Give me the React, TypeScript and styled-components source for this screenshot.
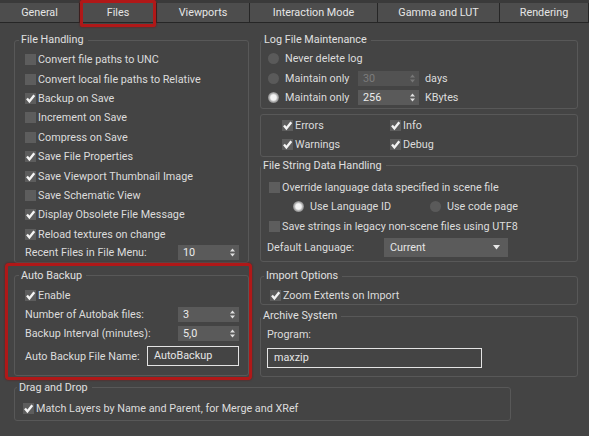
import React from "react";
import styled, { createGlobalStyle } from "styled-components";

const GlobalStyle = createGlobalStyle`
  html, body {
    margin: 0;
    padding: 0;
    background: #444444;
  }
  body {
    font-family: Roboto, "Noto Sans", sans-serif;
    font-size: 10.8px;
    color: #dcdcdc;
  }
`;

const Page = styled.div`
  width: 589px;
  height: 436px;
  background: #444444;
  overflow: hidden;
`;

const TabStrip = styled.div`
  display: flex;
  height: 23px;
  box-sizing: border-box;
  background: #4d4d4d;
  border-top: 3px solid #3a3a3a;
  border-bottom: 1px solid #262626;
`;

const Tab = styled.div<{ $w: number; $marked?: boolean }>`
  position: relative;
  flex: 0 0 ${(p) => p.$w}px;
  line-height: 19px;
  text-align: center;
  font-size: 10.8px;
  color: #e6e6e6;
  border-right: 1px solid #262626;
  box-sizing: border-box;
  &::after {
    content: "";
    display: ${(p) => (p.$marked ? "block" : "none")};
    position: absolute;
    left: 0;
    right: 0;
    top: -3px;
    bottom: -5px;
    border: 3px solid #b01818;
    border-radius: 2px;
    box-shadow: 0 0 2px #6e1010;
  }
`;

const Body = styled.div`
  display: grid;
  grid-template-columns: 235px 318px;
  column-gap: 11px;
  padding: 10px 0 0 14px;
`;

const Column = styled.div`
  display: flex;
  flex-direction: column;
`;

const Group = styled.fieldset<{ $pad?: string; $mt?: number; $w?: number }>`
  margin: ${(p) => p.$mt ?? 0}px 0 0 0;
  padding: ${(p) => p.$pad ?? "3px 9px 0 9px"};
  border: 1px solid #585858;
  border-radius: 3px;
  min-width: 0;
  ${(p) => (p.$w ? `width: ${p.$w}px; box-sizing: border-box;` : "")}
`;

const Legend = styled.legend`
  padding: 0 4px 0 2px;
  margin-left: -6px;
  line-height: 14px;
  font-size: 10.8px;
  color: #e0e0e0;
`;

const Panel = styled.div<{ $mt?: number }>`
  margin-top: ${(p) => p.$mt ?? 0}px;
  border: 1px solid #585858;
  border-radius: 3px;
  padding: 1px 0 1px 21px;
  display: grid;
  grid-template-columns: 108px auto;
`;

const Highlight = styled.div`
  margin: 0 -3px 0 -9px;
  padding: 3px 0 1px 6px;
  border: 3px solid #b01818;
  border-radius: 4px;
  box-shadow: 0 0 2px #6e1010;
`;

const Row = styled.div<{ $h?: number; $indent?: number; $between?: boolean }>`
  display: flex;
  align-items: center;
  height: ${(p) => p.$h ?? 19.5}px;
  padding-left: ${(p) => p.$indent ?? 0}px;
  justify-content: ${(p) => (p.$between ? "space-between" : "flex-start")};
  white-space: nowrap;
`;

const Label = styled.span<{ $w?: number; $ml?: number }>`
  ${(p) => (p.$w ? `flex: 0 0 ${p.$w}px;` : "")}
  margin-left: ${(p) => p.$ml ?? 0}px;
  color: #dcdcdc;
  font-size: 10.8px;
`;

const Box = styled.span`
  flex: 0 0 11px;
  width: 11px;
  height: 11px;
  margin-right: 2px;
  background: #5d5d5d;
  display: inline-flex;
  align-items: center;
  justify-content: center;
`;

const Dot = styled.span<{ $on?: boolean }>`
  flex: 0 0 11px;
  width: 11px;
  height: 11px;
  margin-right: 6px;
  border-radius: 50%;
  background: ${(p) =>
    p.$on
      ? "radial-gradient(circle, #f4f4f4 0 35%, #bdbdbd 50%, #6a6a6a 80%)"
      : "#5a5a5a"};
`;

const Spin = styled.div<{ $w: number; $disabled?: boolean }>`
  display: flex;
  align-items: center;
  justify-content: space-between;
  box-sizing: border-box;
  width: ${(p) => p.$w}px;
  height: 15px;
  padding: 0 4px 0 5px;
  background: ${(p) => (p.$disabled ? "#525252" : "#5a5a5a")};
  color: ${(p) => (p.$disabled ? "#7c7c7c" : "#ececec")};
  font-size: 10.8px;
`;

const Field = styled.div<{ $w: number }>`
  box-sizing: border-box;
  flex: 0 0 ${(p) => p.$w}px;
  width: ${(p) => p.$w}px;
  height: 20px;
  line-height: 18px;
  padding-left: 6px;
  border: 1px solid #e4e4e4;
  background: #444444;
  color: #e6e6e6;
  font-size: 10.8px;
`;

const Drop = styled.div`
  display: flex;
  align-items: center;
  justify-content: space-between;
  box-sizing: border-box;
  width: 124px;
  height: 19px;
  padding: 0 8px 0 6px;
  background: #5b5b5b;
  color: #e6e6e6;
  font-size: 10.8px;
`;

const Check = ({ on, children }: { on?: boolean; children: React.ReactNode }) => (
  <>
    <Box>
      {on && (
        <svg width="11" height="11" viewBox="0 0 11 11">
          <path d="M2 5.5 L4.4 8.4 L9.3 2.2" fill="none" stroke="#f4f4f4" strokeWidth="2.4" />
        </svg>
      )}
    </Box>
    <Label>{children}</Label>
  </>
);

const Arrows = ({ color }: { color: string }) => (
  <svg width="5" height="9" viewBox="0 0 5 9">
    <path d="M0 3.5 L2.5 0.5 L5 3.5 Z M0 5.5 L2.5 8.5 L5 5.5 Z" fill={color} />
  </svg>
);

const tabs: [string, number][] = [
  ["General", 80],
  ["Files", 77],
  ["Viewports", 93],
  ["Interaction Mode", 128],
  ["Gamma and LUT", 122],
  ["Rendering", 89],
];

const fileHandling: [string, boolean][] = [
  ["Convert file paths to UNC", false],
  ["Convert local file paths to Relative", false],
  ["Backup on Save", true],
  ["Increment on Save", false],
  ["Compress on Save", false],
  ["Save File Properties", true],
  ["Save Viewport Thumbnail Image", true],
  ["Save Schematic View", false],
  ["Display Obsolete File Message", true],
  ["Reload textures on change", true],
];

export default function App() {
  return (
    <Page>
      <GlobalStyle />
      <TabStrip>
        {tabs.map(([t, w]) => (
          <Tab key={t} $w={w} $marked={t === "Files"}>
            {t}
          </Tab>
        ))}
      </TabStrip>

      <Body>
        <Column>
          <Group $pad="3px 9px 0 10px">
            <Legend>File Handling</Legend>
            {fileHandling.map(([t, on]) => (
              <Row key={t} $h={19.4}>
                <Check on={on}>{t}</Check>
              </Row>
            ))}
            <Row $h={18} $between>
              <Label>Recent Files in File Menu:</Label>
              <Spin $w={61}>
                10 <Arrows color="#e0e0e0" />
              </Spin>
            </Row>
          </Group>

          <Highlight>
            <Group $pad="3.5px 9px 6px 10px">
              <Legend>Auto Backup</Legend>
              <Row $h={19}>
                <Check on>Enable</Check>
              </Row>
              <Row $h={18} $between>
                <Label>Number of Autobak files:</Label>
                <Spin $w={61}>
                  3 <Arrows color="#e0e0e0" />
                </Spin>
              </Row>
              <Row $h={20.5} $between>
                <Label>Backup Interval (minutes):</Label>
                <Spin $w={61}>
                  5,0 <Arrows color="#e0e0e0" />
                </Spin>
              </Row>
              <Row $h={25} $between>
                <Label>Auto Backup File Name:</Label>
                <Field $w={92}>AutoBackup</Field>
              </Row>
            </Group>
          </Highlight>
        </Column>

        <Column>
          <Group $pad="2px 9px 0 7px">
            <Legend>Log File Maintenance</Legend>
            <Row>
              <Dot />
              <Label>Never delete log</Label>
            </Row>
            <Row>
              <Dot />
              <Label $w={73}>Maintain only</Label>
              <Spin $w={61} $disabled>
                30 <Arrows color="#777777" />
              </Spin>
              <Label $ml={6}>days</Label>
            </Row>
            <Row>
              <Dot $on />
              <Label $w={73}>Maintain only</Label>
              <Spin $w={61}>
                256 <Arrows color="#e0e0e0" />
              </Spin>
              <Label $ml={6}>KBytes</Label>
            </Row>
          </Group>

          <Panel $mt={5}>
            <Row $h={19.5}>
              <Check on>Errors</Check>
            </Row>
            <Row $h={19.5}>
              <Check on>Info</Check>
            </Row>
            <Row $h={19.5}>
              <Check on>Warnings</Check>
            </Row>
            <Row $h={19.5}>
              <Check on>Debug</Check>
            </Row>
          </Panel>

          <Group $mt={2} $pad="5px 9px 3px 6px">
            <Legend>File String Data Handling</Legend>
            <Row $indent={2}>
              <Check>Override language data specified in scene file</Check>
            </Row>
            <Row $indent={26}>
              <Dot $on />
              <Label $w={120}>Use Language ID</Label>
              <Dot />
              <Label>Use code page</Label>
            </Row>
            <Row $indent={2}>
              <Check>Save strings in legacy non-scene files using UTF8</Check>
            </Row>
            <Row $h={22}>
              <Label $w={117}>Default Language:</Label>
              <Drop>
                Current
                <svg width="7" height="5" viewBox="0 0 7 5">
                  <path d="M0 0 L7 0 L3.5 4.5 Z" fill="#e8e8e8" />
                </svg>
              </Drop>
            </Row>
          </Group>

          <Group $mt={7} $pad="3px 9px 0 9px">
            <Legend>Import Options</Legend>
            <Row $h={18}>
              <Check on>Zoom Extents on Import</Check>
            </Row>
          </Group>

          <Group $mt={4} $pad="2px 9px 5px 6px">
            <Legend>Archive System</Legend>
            <Row $h={19}>
              <Label>Program:</Label>
            </Row>
            <Row $h={27}>
              <Field $w={215}>maxzip</Field>
            </Row>
          </Group>
        </Column>
      </Body>

      <DragDrop />
    </Page>
  );
}

const Bottom = styled.div`
  padding: 1px 0 0 14px;
`;

function DragDrop() {
  return (
    <Bottom>
      <Group $w={497} $pad="4.5px 9px 1.5px 8px">
        <Legend>Drag and Drop</Legend>
        <Row $h={19}>
          <Check on>Match Layers by Name and Parent, for Merge and XRef</Check>
        </Row>
      </Group>
    </Bottom>
  );
}
